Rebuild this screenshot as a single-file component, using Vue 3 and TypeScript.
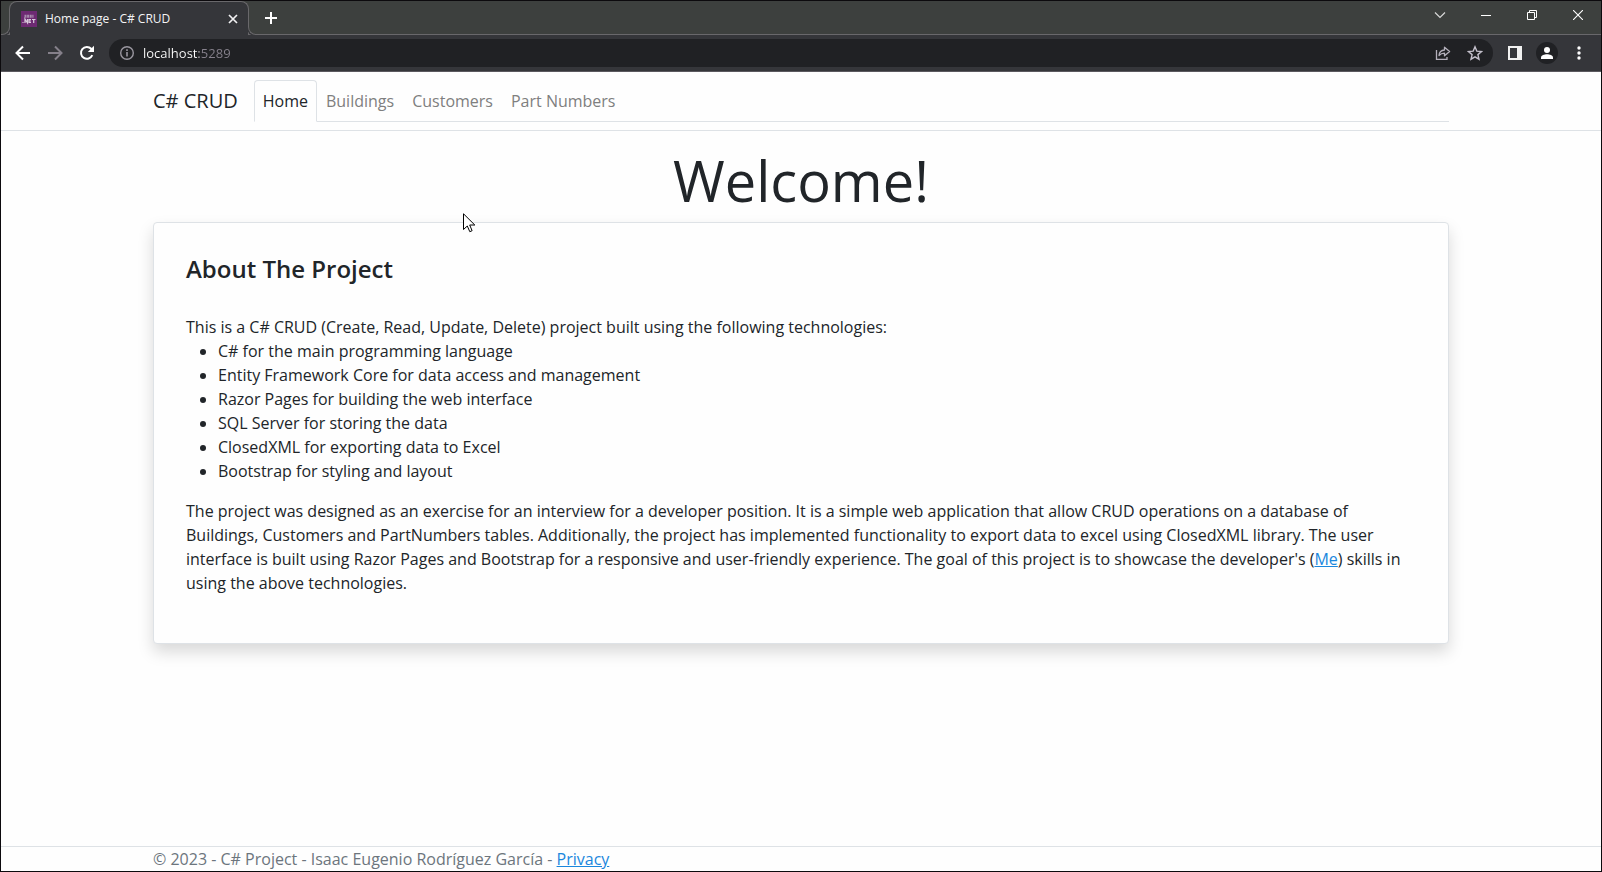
<script setup lang="ts">
import { ref } from 'vue'

interface NavItem {
  label: string
  href: string
}

const address = ref('localhost:5289')
const active = ref('Home')

const navItems: NavItem[] = [
  { label: 'Home', href: '#home' },
  { label: 'Buildings', href: '#buildings' },
  { label: 'Customers', href: '#customers' },
  { label: 'Part Numbers', href: '#part-numbers' },
]

const technologies: string[] = [
  'C# for the main programming language',
  'Entity Framework Core for data access and management',
  'Razor Pages for building the web interface',
  'SQL Server for storing the data',
  'ClosedXML for exporting data to Excel',
  'Bootstrap for styling and layout',
]
</script>

<template>
  <div class="window">
    <div class="tab-strip">
      <div class="tab">
        <svg class="favicon" width="16" height="16" viewBox="0 0 16 16" aria-hidden="true">
          <rect width="16" height="16" fill="#6d2a72" />
          <path d="M3.500 4.500h9M3.500 6h9" stroke="#a78bad" stroke-width="1.400" stroke-dasharray="2 .6" fill="none" />
          <path d="M1.500 11.500h1M4 12V8l2.500 4V8M10 8.500H8v3h2M8 10h2M11 8.500h3.500M12.700 8.500V12" stroke="#d9cbdc" stroke-width="1.200" fill="none" />
        </svg>
        <span class="tab-title">Home page - C# CRUD</span>
        <button class="tab-close" aria-label="Close tab">
          <svg width="10" height="10" viewBox="0 0 10 10"><path d="M1 1l8 8M9 1l-8 8" stroke="#f1f1f2" stroke-width="1.7" /></svg>
        </button>
      </div>
      <button class="new-tab" aria-label="New tab">
        <svg width="14" height="14" viewBox="0 0 14 14"><path d="M7 1v12M1 7h12" stroke="#fff" stroke-width="2" /></svg>
      </button>
      <div class="window-controls">
        <button aria-label="Search tabs">
          <svg width="12" height="12" viewBox="0 0 12 12"><path d="M1 3.500l5 5 5-5" fill="none" stroke="#d8d8d8" stroke-width="1.200" /></svg>
        </button>
        <button aria-label="Minimize">
          <svg width="10" height="10" viewBox="0 0 10 10"><path d="M0 5.500h10" stroke="#fff" /></svg>
        </button>
        <button aria-label="Restore">
          <svg width="10" height="10" viewBox="0 0 10 10"><path d="M.5 2.500h7v7h-7zM2.500 2.500v-2h7v7h-2" fill="none" stroke="#fff" /></svg>
        </button>
        <button aria-label="Close window">
          <svg width="10" height="10" viewBox="0 0 10 10"><path d="M0 0l10 10M10 0L0 10" stroke="#fff" stroke-width="1.100" /></svg>
        </button>
      </div>
    </div>

    <div class="toolbar">
      <button class="tool" aria-label="Back">
        <svg width="16" height="16" viewBox="0 0 16 16"><path d="M15 8H2.500M8 1.500L1.500 8 8 14.500" fill="none" stroke="#fff" stroke-width="2" /></svg>
      </button>
      <button class="tool" aria-label="Forward">
        <svg width="16" height="16" viewBox="0 0 16 16"><path d="M1 8h12.500M8 1.500L14.500 8 8 14.500" fill="none" stroke="#85808a" stroke-width="2" /></svg>
      </button>
      <button class="tool" aria-label="Reload">
        <svg width="16" height="16" viewBox="0 0 16 16">
          <path d="M13.300 10.200A5.900 5.900 0 1 1 12.200 3.800L13.500 5.200" fill="none" stroke="#fff" stroke-width="2" />
          <path d="M15 .8V7H8.800z" fill="#fff" />
        </svg>
      </button>
      <div class="omnibox">
        <svg class="info" width="16" height="16" viewBox="0 0 16 16" aria-hidden="true">
          <circle cx="8" cy="8" r="6.300" fill="none" stroke="#9a97a0" stroke-width="1.400" />
          <path d="M8 7v4.500M8 4.300v1.700" stroke="#9a97a0" stroke-width="1.600" />
        </svg>
        <input v-model="address" class="address" type="text" aria-label="Address" spellcheck="false" />
        <button class="tool" aria-label="Share">
          <svg width="16" height="16" viewBox="0 0 16 16" fill="none" stroke="#b4b0bb" stroke-width="1.300">
            <path d="M1.500 5v9.300H12v-2.300" />
            <path d="M4 10.500C4.300 7 6.300 5.200 9.500 5V2.200L14.600 6.500 9.500 10.800V8.200C7 8.200 5.300 9 4 10.500z" stroke-linejoin="round" />
          </svg>
        </button>
        <button class="tool" aria-label="Bookmark">
          <svg width="16" height="16" viewBox="0 0 16 16"><path d="M8 1.800l1.800 4.300 4.700.4-3.600 3.100 1.100 4.600L8 11.800l-4 2.400 1.100-4.600L1.500 6.500l4.700-.4z" fill="none" stroke="#c4c0cb" stroke-width="1.400" /></svg>
        </button>
      </div>
      <button class="tool" aria-label="Side panel">
        <svg width="14" height="14" viewBox="0 0 14 14"><path d="M0 0h14v14H0zM2 2v10h7V2z" fill="#f1f1f1" fill-rule="evenodd" /></svg>
      </button>
      <button class="tool" aria-label="Profile">
        <svg width="22" height="22" viewBox="0 0 22 22">
          <circle cx="11" cy="11" r="11" fill="#202124" />
          <circle cx="11" cy="8" r="3" fill="#fff" />
          <path d="M5 17v-1.500c0-2 3.500-3.200 6-3.200s6 1.200 6 3.200V17z" fill="#fff" />
        </svg>
      </button>
      <button class="tool" aria-label="Menu">
        <svg width="4" height="14" viewBox="0 0 4 14" fill="#fff"><circle cx="2" cy="2" r="1.700" /><circle cx="2" cy="7" r="1.700" /><circle cx="2" cy="12" r="1.700" /></svg>
      </button>
    </div>

    <div class="page">
      <header class="site-header">
        <nav class="container navbar">
          <a class="brand" href="#home">C# CRUD</a>
          <ul class="nav-tabs">
            <li v-for="item in navItems" :key="item.label">
              <a :href="item.href" class="nav-link" :class="{ active: item.label === active }" @click="active = item.label">{{ item.label }}</a>
            </li>
          </ul>
        </nav>
      </header>

      <main class="container">
        <h1>Welcome!</h1>
        <section class="card">
          <h2>About The Project</h2>
          <p class="intro">This is a C# CRUD (Create, Read, Update, Delete) project built using the following technologies:</p>
          <ul class="tech-list">
            <li v-for="tech in technologies" :key="tech">{{ tech }}</li>
          </ul>
          <p class="summary">
            The project was designed as an exercise for an interview for a developer position. It is a simple web
            application that allow CRUD operations on a database of Buildings, Customers and PartNumbers tables.
            Additionally, the project has implemented functionality to export data to excel using ClosedXML library.
            The user interface is built using Razor Pages and Bootstrap for a responsive and user-friendly experience.
            The goal of this project is to showcase the developer's (<a href="#me">Me</a>) skills in using the above
            technologies.
          </p>
        </section>
      </main>

      <footer class="site-footer">
        <div class="container">© 2023 - C# Project - Isaac Eugenio Rodríguez García - <a href="#privacy">Privacy</a></div>
      </footer>
    </div>

    <svg class="pointer" width="13" height="20" viewBox="0 0 13 20" aria-hidden="true">
      <path d="M.5.800V16.500L4.300 13l2.500 5.700 2.300-1L6.700 12h5.100z" fill="#fff" stroke="#000" />
    </svg>
  </div>
</template>

<style>
body {
  margin: 0;
}
</style>

<style scoped>
.window {
  position: relative;
  box-sizing: border-box;
  min-height: 100vh;
  display: flex;
  flex-direction: column;
  border: 1px solid #0c0a0d;
  background: #fefefe;
  color: #212529;
  font: 400 16px/24px "Open Sans", "Noto Sans", sans-serif;
}

button {
  display: flex;
  align-items: center;
  justify-content: center;
  padding: 0;
  border: 0;
  background: none;
}

.tab-strip {
  display: flex;
  height: 33px;
  padding-left: 8px;
  border-bottom: 1px solid #69686b;
  background: #3d403e;
}

.tab {
  position: relative;
  box-sizing: border-box;
  display: flex;
  align-items: center;
  width: 240px;
  height: 34px;
  padding: 0 7px 0 11px;
  border: 1px solid #69686b;
  border-bottom: 0;
  border-radius: 8px 8px 0 0;
  background: #35363a;
}

/* Flared feet joining the tab to the toolbar */
.tab::before,
.tab::after {
  content: "";
  position: absolute;
  bottom: 0;
  box-sizing: border-box;
  width: 9px;
  height: 9px;
  border-bottom: 1px solid #69686b;
  background: #3d403e;
}

.tab::before {
  left: -9px;
  border-right: 1px solid #69686b;
  border-bottom-right-radius: 8px;
  box-shadow: 1px 1px 0 #35363a;
}

.tab::after {
  right: -9px;
  border-left: 1px solid #69686b;
  border-bottom-left-radius: 8px;
  box-shadow: -1px 1px 0 #35363a;
}

.tab-title {
  flex: 1;
  padding-left: 8px;
  color: #f4f4f5;
  font-size: 12px;
  line-height: 16px;
  white-space: nowrap;
}

.tab-close {
  width: 16px;
  height: 16px;
}

.new-tab {
  width: 28px;
  margin-left: 8px;
}

.window-controls {
  display: flex;
  margin-left: auto;
}

.window-controls button {
  width: 46px;
  height: 28px;
}

.toolbar {
  display: flex;
  align-items: center;
  padding: 4px 6px;
  border-bottom: 1px solid #5b595f;
  background: #35363a;
}

.tool {
  width: 32px;
  height: 28px;
}

.omnibox {
  flex: 1;
  display: flex;
  align-items: center;
  height: 28px;
  margin: 0 6px;
  padding: 0 2px 0 10px;
  border-radius: 14px;
  background: #202124;
}

.address {
  flex: 1;
  min-width: 0;
  height: 24px;
  margin-left: 8px;
  padding: 0;
  border: 0;
  outline: 0;
  background: linear-gradient(90deg, #fff 56px, #87828d 56px);
  background-clip: text;
  color: transparent;
  caret-color: #fff;
  font: 13px/24px "Open Sans", "Noto Sans", sans-serif;
}

.page {
  flex: 1;
  display: flex;
  flex-direction: column;
}

.container {
  box-sizing: border-box;
  width: 100%;
  max-width: 1320px;
  margin: 0 auto;
  padding: 0 12px;
}

.site-header {
  padding: 8px 0;
  border-bottom: 1px solid #dee2e6;
}

.navbar {
  display: flex;
  align-items: center;
}

.brand {
  margin-right: 16px;
  color: #212529;
  font-size: 20px;
  line-height: 30px;
  text-decoration: none;
  white-space: nowrap;
}

.nav-tabs {
  flex: 1;
  display: flex;
  margin: 0;
  padding: 0;
  border-bottom: 1px solid #dee2e6;
  list-style: none;
}

.nav-link {
  display: block;
  margin-bottom: -1px;
  padding: 8px;
  border: 1px solid transparent;
  border-radius: 4px 4px 0 0;
  color: #7f7f7f;
  text-decoration: none;
}

.nav-link.active {
  border-color: #dee2e6 #dee2e6 #fefefe;
  background: #fefefe;
  color: #212529;
}

main {
  flex: 1;
}

h1 {
  margin: 16px 0 8px;
  font-size: 56px;
  font-weight: 400;
  line-height: 67px;
  text-align: center;
}

.card {
  padding: 32px 32px 48px;
  border: 1px solid #dee2e6;
  border-radius: 4px;
  background: #fefefe;
  box-shadow: 0 8px 16px rgba(0, 0, 0, 0.15);
}

h2 {
  margin: 0 0 32px;
  font-size: 24px;
  font-weight: 600;
  line-height: 28px;
}

.intro,
.summary {
  margin: 0;
}

.tech-list {
  margin: 0 0 16px;
  padding-left: 32px;
}

.card a,
.site-footer a {
  color: #1b87dd;
}

.site-footer {
  border-top: 1px solid #dee2e6;
  color: #6c757d;
}

.pointer {
  position: absolute;
  top: 212px;
  left: 462px;
}
</style>
